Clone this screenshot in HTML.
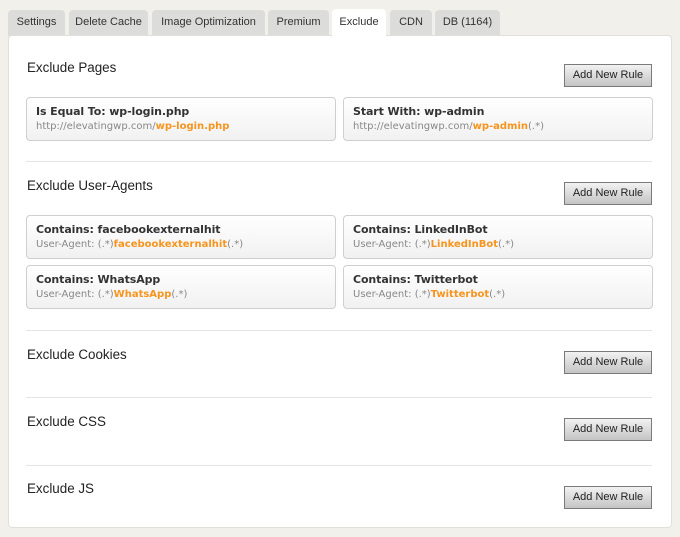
<!DOCTYPE html>
<html><head><meta charset="utf-8"><style>
*{box-sizing:border-box;margin:0;padding:0}
body{width:680px;height:537px;background:#f1f0eb;font-family:"Liberation Sans",sans-serif;position:relative;overflow:hidden;color:#222}
.tab{position:absolute;top:10px;height:26px;background:#dcdcdb;border-radius:4px 4px 0 0;font-size:11px;color:#333;text-align:center;line-height:25px}
.tab.act{background:#fff;top:9px;height:28px;line-height:27px;z-index:2}
.panel{position:absolute;left:8px;top:35px;width:664px;height:493px;background:#fff;border:1px solid #e0dfda;border-radius:4px}
h3{position:absolute;left:27px;font-size:13.4px;font-weight:normal;color:#222}
.btn{position:absolute;left:564px;width:88px;height:23px;border:1px solid #7a7a7a;background:linear-gradient(#f2f2f2,#c4c4c4);font-size:11px;color:#222;text-align:center;line-height:21px}
.card{position:absolute;width:310px;height:44px;border:1px solid #cfcfcf;border-radius:4px;background:linear-gradient(#fff,#f1f1f1);padding:6px 0 0 9px;font-family:"DejaVu Sans",sans-serif}
.card b{display:block;font-size:11px;color:#333;line-height:15px;letter-spacing:-.1px}
.card span{display:block;font-size:10px;color:#888;line-height:16px;letter-spacing:0}
.card i{font-style:normal;font-weight:bold;color:#f7941d}
.sep{position:absolute;left:26px;width:626px;border-top:1px solid #e4e4e4}
</style></head><body>
<div class="tab" style="left:8px;width:57px">Settings</div>
<div class="tab" style="left:69px;width:79px">Delete Cache</div>
<div class="tab" style="left:152px;width:113px">Image Optimization</div>
<div class="tab" style="left:268px;width:61px">Premium</div>
<div class="tab act" style="left:332px;width:54px">Exclude</div>
<div class="tab" style="left:390px;width:42px">CDN</div>
<div class="tab" style="left:435px;width:65px">DB (1164)</div>
<div class="panel"></div>

<h3 style="top:60px">Exclude Pages</h3>
<div class="btn" style="top:64px">Add New Rule</div>
<div class="card" style="left:26px;top:97px"><b>Is Equal To: wp-login.php</b><span>http://elevatingwp.com/<i>wp-login.php</i></span></div>
<div class="card" style="left:343px;top:97px"><b>Start With: wp-admin</b><span>http://elevatingwp.com/<i>wp-admin</i>(.*)</span></div>
<div class="sep" style="top:161px"></div>

<h3 style="top:178px">Exclude User-Agents</h3>
<div class="btn" style="top:182px">Add New Rule</div>
<div class="card" style="left:26px;top:215px"><b>Contains: facebookexternalhit</b><span>User-Agent: (.*)<i>facebookexternalhit</i>(.*)</span></div>
<div class="card" style="left:343px;top:215px"><b>Contains: LinkedInBot</b><span>User-Agent: (.*)<i>LinkedInBot</i>(.*)</span></div>
<div class="card" style="left:26px;top:265px"><b>Contains: WhatsApp</b><span>User-Agent: (.*)<i>WhatsApp</i>(.*)</span></div>
<div class="card" style="left:343px;top:265px"><b>Contains: Twitterbot</b><span>User-Agent: (.*)<i>Twitterbot</i>(.*)</span></div>
<div class="sep" style="top:330px"></div>

<h3 style="top:347px">Exclude Cookies</h3>
<div class="btn" style="top:351px">Add New Rule</div>
<div class="sep" style="top:397px"></div>

<h3 style="top:414px">Exclude CSS</h3>
<div class="btn" style="top:418px">Add New Rule</div>
<div class="sep" style="top:465px"></div>

<h3 style="top:481px">Exclude JS</h3>
<div class="btn" style="top:486px">Add New Rule</div>
</body></html>
